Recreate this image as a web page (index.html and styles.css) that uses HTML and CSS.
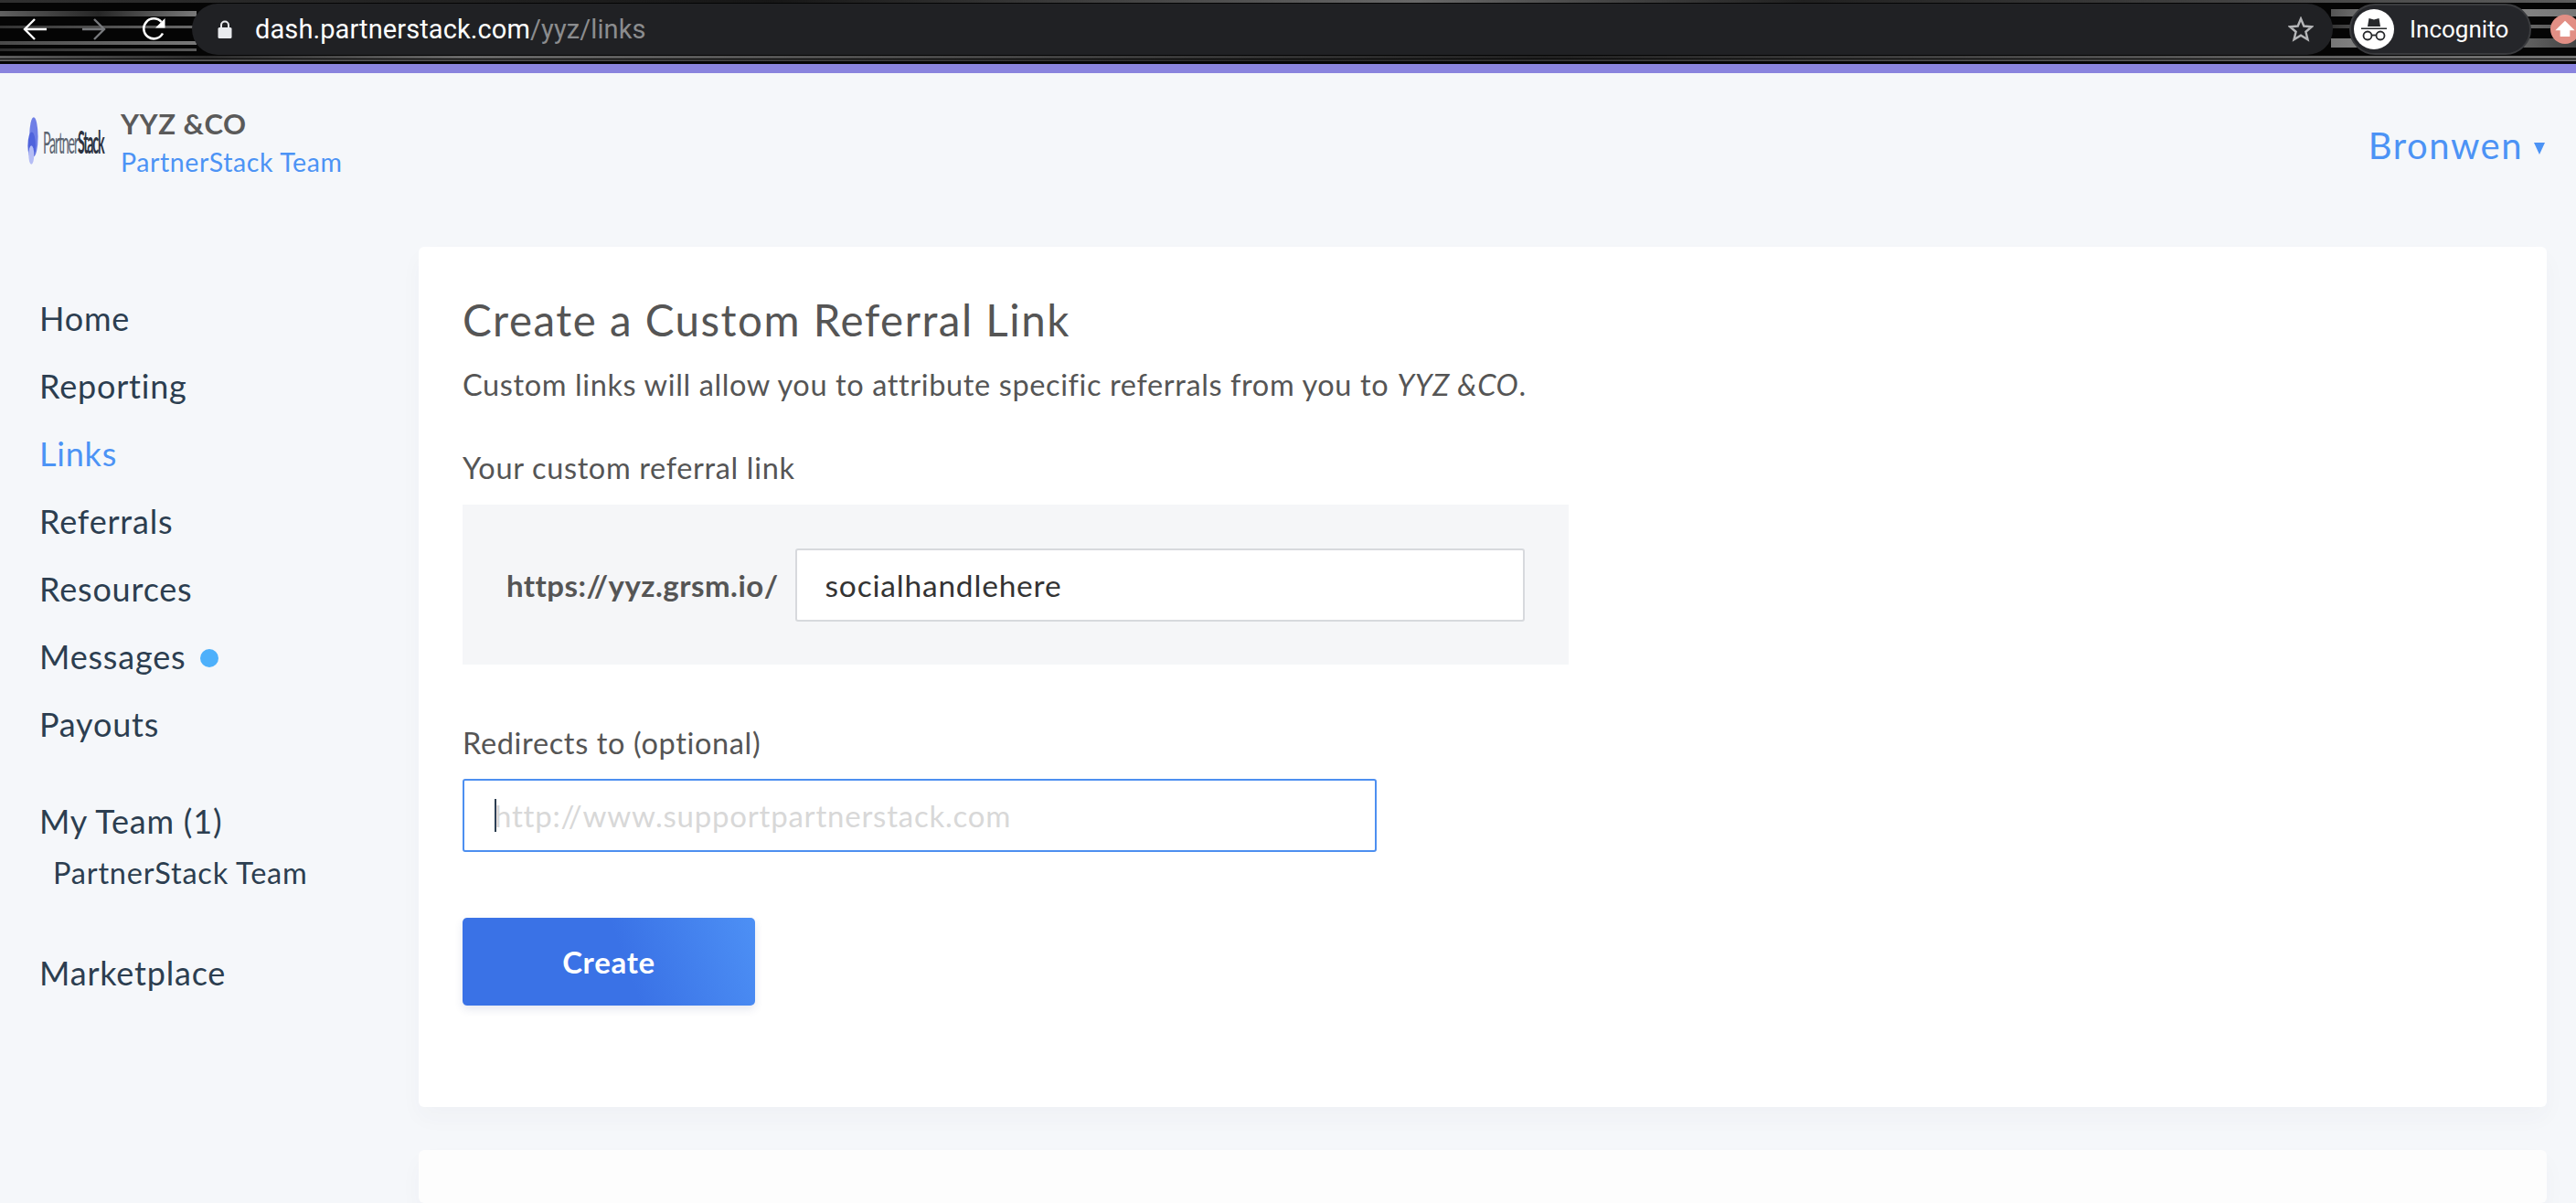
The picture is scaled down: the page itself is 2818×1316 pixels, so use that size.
FILE: index.html
```html
<!DOCTYPE html>
<html lang="en">
<head>
<meta charset="utf-8">
<title>Create a Custom Referral Link</title>
<link rel="stylesheet" href="styles.css">
</head>
<body>
<div class="chrome">
  <div class="nav-icons">
    <svg class="nav-icon" viewBox="0 0 28 28"><path d="M27 14H3M14 3L3 14l11 11" fill="none" stroke="#fff" stroke-width="2.400"/></svg>
    <svg class="nav-icon" viewBox="0 0 28 28"><path d="M1 14h24M14 3l11 11-11 11" fill="none" stroke="#77797c" stroke-width="2.400"/></svg>
    <svg class="nav-icon" viewBox="0 0 28 28"><path d="M24 18.500A11 11 0 1 1 22.500 6" fill="none" stroke="#fff" stroke-width="2.600"/><path d="M26.500 2v10.500H16z" fill="#fff"/></svg>
  </div>
  <div class="omnibox">
    <svg class="lock" viewBox="0 0 16 20"><path d="M4 9V5.500a4 4 0 0 1 8 0V9" fill="none" stroke="#e8eaed" stroke-width="2"/><rect x="0.500" y="8" width="15" height="12" rx="1.500" fill="#e8eaed"/></svg>
    <span class="url">dash.partnerstack.com<span class="url-path">/yyz/links</span></span>
    <svg class="star" viewBox="0 0 28 28"><path d="M14 2.500l3.300 8 8.700.7-6.600 5.600 2.100 8.500L14 20.700l-7.500 4.600 2.100-8.500L2 11.200l8.700-.7z" fill="none" stroke="#b5b6b8" stroke-width="2.400"/></svg>
  </div>
  <div class="profile">
    <svg class="avatar" viewBox="0 0 44 44"><circle cx="22" cy="22" r="22" fill="#fff"/><path d="M15 19l1.500-9 5.500 1.500 5.500-1.500 1.500 9zM8 20.500h28v1.500H8z" fill="#26282b"/><circle cx="15" cy="29" r="4.500" fill="none" stroke="#26282b" stroke-width="1.800"/><circle cx="29" cy="29" r="4.500" fill="none" stroke="#26282b" stroke-width="1.800"/><path d="M19.500 28.500h5" stroke="#26282b" stroke-width="1.800"/></svg>
    <span class="profile-name">Incognito</span>
  </div>
  <div class="update"><svg viewBox="0 0 24 24"><path d="M12 5l8 8h-4v5H8v-5H4z" fill="#fff"/></svg></div>
</div>
<div class="accent"></div>

<header class="topbar">
  <div class="brand">
    <div class="logo">
      <svg class="logo-mark" viewBox="0 0 14 64"><ellipse cx="8" cy="27" rx="5.500" ry="25" fill="#6f7fe6"/><ellipse cx="5.500" cy="38" rx="5" ry="17" fill="#4f63dc"/><ellipse cx="5" cy="50" rx="3.500" ry="12" fill="#b5bdf5"/></svg>
      <span class="logo-text">Partner<b>Stack</b></span>
    </div>
    <div class="brand-text">
      <div class="brand-name">YYZ &amp;CO</div>
      <div class="brand-team">PartnerStack Team</div>
    </div>
  </div>
  <div class="user">Bronwen <span class="caret"></span></div>
</header>

<div class="layout">
  <nav class="sidebar">
    <a class="nav-item">Home</a>
    <a class="nav-item">Reporting</a>
    <a class="nav-item active">Links</a>
    <a class="nav-item">Referrals</a>
    <a class="nav-item">Resources</a>
    <a class="nav-item">Messages <span class="dot"></span></a>
    <a class="nav-item">Payouts</a>
    <a class="nav-item team">My Team (1)</a>
    <a class="sub-item">PartnerStack Team</a>
    <a class="nav-item market">Marketplace</a>
  </nav>
  <main class="content">
    <section class="card">
      <h1 class="title">Create a Custom Referral Link</h1>
      <p class="lead">Custom links will allow you to attribute specific referrals from you to <em>YYZ &amp;CO</em>.</p>
      <div class="label first">Your custom referral link</div>
      <div class="link-box">
        <span class="domain">https://yyz.grsm.io/</span>
        <div class="field handle">socialhandlehere</div>
      </div>
      <div class="label second">Redirects to (optional)</div>
      <div class="field redirect"><span class="cursor"></span><span class="placeholder">http://www.supportpartnerstack.com</span></div>
      <div class="button">Create</div>
    </section>
    <section class="card next"></section>
  </main>
</div>
</body>
</html>
```
FILE: styles.css
```css
* { box-sizing: border-box; }
html, body { margin: 0; height: 1316px; overflow: hidden; }
body { background: #f5f7fa; font-family: Lato, "Open Sans", sans-serif; color: #555; }

.chrome {
  height: 70px;
  display: flex;
  align-items: flex-start;
  padding-top: 4px;
  background:
    linear-gradient(90deg, rgba(90,90,90,.5) 0, rgba(40,40,40,.5) 30%, rgba(170,170,170,.6) 55%, rgba(60,60,60,.5) 70%, rgba(150,150,150,.6) 100%) 0 0 / 100% 3px no-repeat,
    linear-gradient(90deg, rgba(130,130,130,.7), rgba(80,80,80,.5) 8%, rgba(170,170,170,.6) 18%, rgba(60,60,60,.5) 60%, rgba(190,190,190,.6) 100%) 0 61px / 100% 3px no-repeat,
    linear-gradient(90deg, rgba(150,150,150,.6), rgba(70,70,70,.5) 50%, rgba(170,170,170,.6)) 0 65px / 100% 2px no-repeat,
    linear-gradient(90deg, rgba(120,120,120,.8), rgba(60,60,60,.6) 50%, rgba(150,150,150,.8)) 0 12px / 215px 6px no-repeat,
    linear-gradient(90deg, rgba(90,90,90,.8), rgba(170,170,170,.7)) 0 45px / 215px 4px no-repeat,
    linear-gradient(90deg, rgba(70,70,70,.7), rgba(130,130,130,.8)) 0 28px / 215px 3px no-repeat,
    linear-gradient(90deg, rgba(60,60,60,.7), rgba(110,110,110,.8)) 0 53px / 215px 3px no-repeat,
    linear-gradient(90deg, #555, #999 30%, #777) 2550px 10px / 268px 8px no-repeat,
    linear-gradient(90deg, #333, #888 40%, #555) 2550px 27px / 268px 4px no-repeat,
    linear-gradient(90deg, #777, #999 40%, #444) 2550px 42px / 268px 10px no-repeat,
    #050505;
}
.nav-icons { width: 210px; height: 56px; display: flex; align-items: center; gap: 37px; padding-left: 24px; flex: none; }
.nav-icon { width: 28px; height: 28px; flex: none; }
.omnibox {
  width: 2342px; height: 56px; flex: none;
  background: #202124; border-radius: 28px;
  display: flex; align-items: center;
  padding: 0 21px 0 28px;
  font-family: Roboto, sans-serif;
}
.lock { width: 16px; height: 20px; flex: none; }
.url { margin-left: 25px; font-size: 29px; color: #fff; letter-spacing: .1px; }
.url-path { color: #8b8c8e; }
.star { width: 28px; height: 28px; margin-left: auto; flex: none; }
.profile {
  margin-left: 18px; width: 199px; height: 56px; flex: none;
  background: #25262a; border: 2px solid #3a3b3e; border-radius: 28px;
  display: flex; align-items: center; padding-left: 3px;
}
.avatar { width: 44px; height: 44px; flex: none; }
.profile-name { margin-left: 17px; font-family: Roboto, sans-serif; font-size: 26px; color: #fff; }
.update {
  margin-left: 21px; margin-top: 12px; width: 32px; height: 32px; flex: none;
  border-radius: 50%; background: #e28f85;
}
.update svg { display: block; width: 32px; height: 32px; }
.accent { height: 10px; background: #8a84de; }

.topbar { height: 190px; display: flex; justify-content: space-between; align-items: flex-start; padding: 40px 34px 0 30px; }
.brand { display: flex; align-items: flex-start; }
.logo { width: 102px; height: 64px; display: flex; align-items: center; margin-top: 2px; }
.logo-mark { width: 12px; height: 62px; flex: none; }
.logo-text { font-size: 21px; color: #5b6470; font-family: "Liberation Sans Narrow", Lato, sans-serif; letter-spacing: -1.800px; transform: scaleX(.68) scaleY(1.600); transform-origin: left center; margin-left: 5px; white-space: nowrap; }
.logo-text b { color: #2b3240; }
.brand-text { margin-top: -3px; }
.brand-name { font-size: 31px; line-height: 36px; font-weight: 700; color: #5a5a5a; letter-spacing: .5px; }
.brand-team { font-size: 28.500px; line-height: 36px; margin-top: 6px; color: #4c93f5; letter-spacing: .6px; }
.user { font-size: 40px; line-height: 60px; color: #4c93f5; letter-spacing: 1.500px; margin-top: 9px; display: flex; align-items: center; }
.caret { width: 0; height: 0; margin-left: 12px; margin-top: 6px; border-left: 6px solid transparent; border-right: 6px solid transparent; border-top: 13px solid #4c93f5; }

.layout { display: flex; align-items: flex-start; }
.sidebar { width: 458px; flex: none; padding: 41px 0 0 43px; display: flex; flex-direction: column; }
.nav-item { font-size: 36px; line-height: 74px; height: 74px; color: #2c3e50; letter-spacing: .8px; display: flex; align-items: center; }
.nav-item.active { color: #4c93f5; }
.dot { width: 20px; height: 20px; border-radius: 50%; background: #4db0fb; margin-left: 16px; margin-top: 3px; }
.nav-item.team { margin-top: 32px; }
.sub-item { font-size: 32.500px; line-height: 40px; height: 38px; padding-left: 15px; color: #2c3e50; letter-spacing: .8px; }
.nav-item.market { margin-top: 54px; }

.content { width: 2328px; flex: none; }
.card { background: #fff; border-radius: 6px; height: 941px; padding: 52px 48px 0; box-shadow: 0 12px 24px rgba(60,70,90,.03); }
.card.next { height: 58px; margin-top: 47px; background: #fdfdfd; padding: 0; }
.title { margin: 0; font-size: 47.500px; line-height: 56px; font-weight: 400; color: #555; letter-spacing: 1.500px; }
.lead { margin: 21px 0 0; font-size: 32.500px; line-height: 44px; color: #555; letter-spacing: .62px; }
.lead em { font-style: italic; }
.label { font-size: 32.500px; line-height: 40px; color: #555; letter-spacing: .65px; }
.label.first { margin-top: 49px; }
.label.second { margin-top: 66px; }
.link-box { width: 1210px; height: 175px; margin-top: 20px; background: #f5f6f8; display: flex; align-items: center; padding: 0 48px; gap: 18px; }
.domain { font-size: 33px; font-weight: 700; color: #555; white-space: nowrap; letter-spacing: .48px; }
.field { background: #fff; height: 80px; display: flex; align-items: center; border-radius: 3px; }
.handle { flex: 1; border: 2px solid #d7d9dd; padding: 0 31px; font-size: 33.500px; color: #333; letter-spacing: .8px; }
.redirect { width: 1000px; margin-top: 19px; border: 2px solid #4d8ff0; padding: 0 33px; font-size: 33px; letter-spacing: .78px; }
.cursor { width: 2px; height: 36px; background: #2c3e50; flex: none; margin-right: -2px; }
.placeholder { color: #d8d8d8; }
.button {
  width: 320px; height: 96px; margin-top: 72px; border-radius: 5px;
  background: linear-gradient(70deg, #3a72e6 55%, #4d90f5 100%);
  box-shadow: 0 4px 10px rgba(40,60,120,.12);
  color: #fff; font-size: 33px; font-weight: 700; letter-spacing: .7px;
  display: flex; align-items: center; justify-content: center;
}
```
